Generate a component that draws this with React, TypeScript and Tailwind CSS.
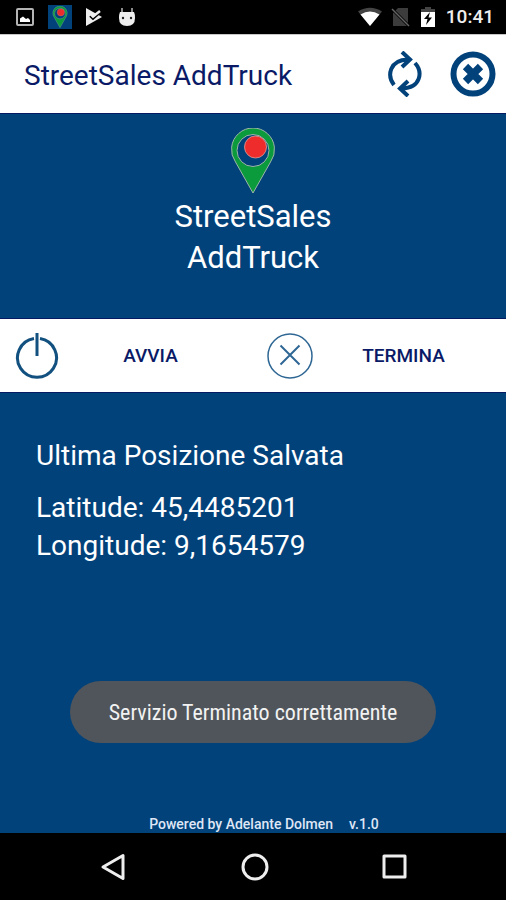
import type { ReactNode } from "react";

function MapPin({ className }: { className: string }) {
  return (
    <svg viewBox="0 0 46 66" className={className} aria-hidden="true">
      <path
        d="M23 65L5.500 34A21.500 21.500 0 1 1 40.500 34Z"
        fill="#0b9a3c"
        stroke="#9cb5a8"
        strokeWidth="1"
      />
      <circle cx="23" cy="22.500" r="16" fill="#02427b" stroke="#9cb5a8" strokeWidth="1" />
      <circle cx="25.500" cy="19" r="11" fill="#ee2c2c" stroke="#d9a09a" strokeWidth="0.800" />
    </svg>
  );
}

function StatusBar() {
  return (
    <div className="flex h-[34px] items-center justify-between bg-black pr-3 pl-4 text-white">
      <div className="flex items-center">
        <svg viewBox="0 0 18 18" className="size-[18px]" aria-hidden="true">
          <rect x="1" y="1" width="16" height="16" rx="1" fill="none" stroke="#b4b4b4" strokeWidth="2" />
          <path d="M4 14V10.500L7 8.500L10 11L12 10L14 12V14Z" fill="#fff" />
        </svg>
        <div className="ml-[14px] flex h-6 w-6 items-center justify-center bg-[#02427b]">
          <MapPin className="h-[22px] w-4" />
        </div>
        <svg viewBox="0 0 20 20" className="ml-3 size-5" aria-hidden="true">
          <path d="M2 1L18 10L2 19Z" fill="#eee" />
          <path d="M6 9L9 12L18 4" fill="none" stroke="#000" strokeWidth="2" />
          <path d="M6 6.500L9 9.500L16 4" fill="none" stroke="#eee" strokeWidth="2.500" />
        </svg>
        <svg viewBox="0 0 18 22" className="ml-[14px] h-[22px] w-[18px]" aria-hidden="true">
          <path d="M4 8V2M14 8V2" stroke="#bbb" strokeWidth="1.500" />
          <path d="M2 6H16Q17 8 17 12Q17 20 9 20Q1 20 1 12Q1 8 2 6Z" fill="#eee" />
          <circle cx="5" cy="12" r="1.200" fill="#222" />
          <circle cx="13" cy="12" r="1.200" fill="#222" />
        </svg>
      </div>
      <div className="flex items-center">
        <svg viewBox="0 0 24 20" className="h-5 w-6" aria-hidden="true">
          <path d="M0 4.500Q12-3 24 4.500L12 19Z" fill="#444" />
          <path d="M2.500 7.500Q12 1.500 21.500 7.500L12 19Z" fill="#fff" />
        </svg>
        <svg viewBox="0 0 20 20" className="ml-[9px] size-5" aria-hidden="true">
          <path d="M7 1H17V19H2V6Z" fill="#3c3c3c" />
          <path d="M1 2L18 19" stroke="#000" strokeWidth="3" />
          <path d="M1 2L18 19" stroke="#666" strokeWidth="1.500" />
        </svg>
        <svg viewBox="0 0 14 22" className="ml-[10px] h-[22px] w-[14px]" aria-hidden="true">
          <path d="M4 1H10V3H14V7H0V3H4Z" fill="#444" />
          <path d="M0 6H14V21H0Z" fill="#fff" />
          <path d="M9 6L3 13H6.500L5 19L11 11.500H7.500Z" fill="#000" />
        </svg>
        <span className="ml-[11px] text-[19px] leading-6 font-medium text-[#eee]">10:41</span>
      </div>
    </div>
  );
}

function Action({ icon, label }: { icon: ReactNode; label: string }) {
  return (
    <button type="button" className="flex flex-1 items-center pl-[14px] text-[#0a1a66]">
      {icon}
      <span className="flex-1 pr-3 text-center text-[19px] leading-6 font-medium">{label}</span>
    </button>
  );
}

export default function App() {
  return (
    <div className="flex min-h-screen flex-col bg-[#02427b] font-['Roboto',sans-serif]">
      <StatusBar />

      <header className="flex h-[79px] items-center border-t border-[#c8c8c8] bg-white pr-[10px] pl-6">
        <h1 className="flex-1 pt-1 text-[28px] leading-8 text-[#0a1a66]">StreetSales AddTruck</h1>
        <button type="button" aria-label="Aggiorna" className="text-[#02427b]">
          <svg viewBox="0 0 34 46" className="h-[46px] w-[34px]" fill="none" stroke="currentColor" strokeWidth="4" aria-hidden="true">
            <path d="M6 34C-1 25 1 9 20 8.500" />
            <path d="M14 1L22 8.500L14 16" />
            <path d="M27 12C35 21 33 37 14 37.500" />
            <path d="M20 30L12 37.500L20 45" />
          </svg>
        </button>
        <button type="button" aria-label="Chiudi" className="ml-7 text-[#02427b]">
          <svg viewBox="0 0 46 46" className="size-[46px]" fill="none" stroke="currentColor" aria-hidden="true">
            <circle cx="23" cy="23" r="19.500" strokeWidth="6" />
            <path d="M15.500 15.500L30.500 30.500M30.500 15.500L15.500 30.500" strokeWidth="7.500" />
          </svg>
        </button>
      </header>

      <main className="flex flex-1 flex-col text-white">
        <section className="flex h-[206px] flex-col items-center border-y border-[#041a63] pt-[14px]">
          <MapPin className="h-[66px] w-[46px]" />
          <p className="mt-[2px] text-center text-[31px] leading-[41px]">
            StreetSales
            <br />
            AddTruck
          </p>
        </section>

        <div className="flex h-[73px] bg-white">
          <Action
            label="AVVIA"
            icon={
              <svg viewBox="0 0 46 46" className="size-[46px]" fill="none" stroke="#12507f" strokeWidth="3" aria-hidden="true">
                <path d="M20 5.500A19.500 19.500 0 1 0 26 5.500" />
                <path d="M23 0V23" />
              </svg>
            }
          />
          <Action
            label="TERMINA"
            icon={
              <svg viewBox="0 0 46 46" className="size-[46px]" fill="none" stroke="#2f6794" strokeWidth="1.500" aria-hidden="true">
                <circle cx="23" cy="23" r="22" />
                <path d="M13.500 12.500L32.500 31.500M32.500 12.500L13.500 31.500" strokeWidth="2" />
              </svg>
            }
          />
        </div>

        <section className="flex-1 border-t border-[#041a63] px-9 pt-11 text-[28px] leading-[38px]">
          <h2>Ultima Posizione Salvata</h2>
          <p className="mt-[14px]">Latitude: 45,4485201</p>
          <p>Longitude: 9,1654579</p>
        </section>

        <div role="status" className="mx-auto flex h-[62px] items-center rounded-full bg-[#50555b] px-[39px] text-[22px] leading-7 text-[#f2f2f2]">
          <span className="pt-[2px] font-['Roboto_Condensed','Roboto',sans-serif]">Servizio Terminato correttamente</span>
        </div>

        <footer className="mt-[72px] flex justify-center gap-4 pl-[22px] text-sm leading-[18px] font-medium text-[#dfe6f5]">
          <span>Powered by Adelante Dolmen</span>
          <span>v.1.0</span>
        </footer>
      </main>

      <nav className="flex h-[67px] items-center justify-between bg-black pr-[97px] pl-[100px] text-[#eee]">
        <button type="button" aria-label="Indietro">
          <svg viewBox="0 0 28 28" className="size-7" fill="none" stroke="currentColor" strokeWidth="3" strokeLinejoin="round" aria-hidden="true">
            <path d="M23 2.500V25.500L3 14Z" />
          </svg>
        </button>
        <button type="button" aria-label="Home">
          <svg viewBox="0 0 28 28" className="size-7" fill="none" stroke="currentColor" strokeWidth="3" aria-hidden="true">
            <circle cx="14" cy="14" r="12" />
          </svg>
        </button>
        <button type="button" aria-label="Recenti">
          <svg viewBox="0 0 28 28" className="size-7" fill="none" stroke="currentColor" strokeWidth="3" strokeLinejoin="round" aria-hidden="true">
            <rect x="3" y="3" width="21" height="21" />
          </svg>
        </button>
      </nav>
    </div>
  );
}
